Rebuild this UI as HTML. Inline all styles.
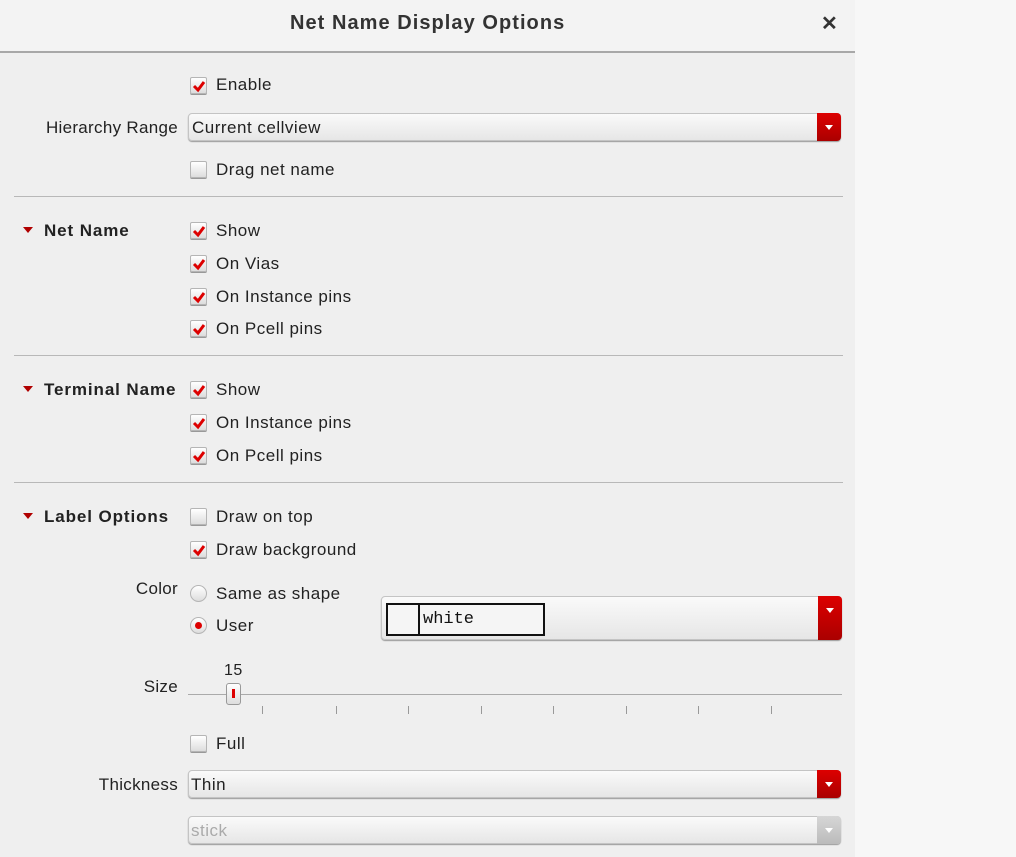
<!DOCTYPE html>
<html><head><meta charset="utf-8"><style>
body{margin:0;width:1016px;height:857px;background:#f7f7f7;font-family:"Liberation Sans",sans-serif;color:#222;position:relative;overflow:hidden}
.dlg{position:absolute;left:0;top:0;width:855px;height:857px;background:#efefef}
.hdr{position:absolute;left:0;top:0;width:855px;height:51px;background:#f3f3f3;border-bottom:2px solid #a8a8a8}
.t{position:absolute;font-size:17px;line-height:20px;white-space:nowrap;letter-spacing:0.5px;margin-top:1px}
.r{right:677px;letter-spacing:0.3px}
.b{font-weight:bold;letter-spacing:0.9px}
.cb{position:absolute;left:190px;width:15px;height:15px;border:1px solid #b5b5b5;border-radius:2px;background:linear-gradient(#fff,#ddd);box-shadow:0 1px 0 #999}
.cb svg{position:absolute;left:1px;top:1px}
.sep{position:absolute;left:14px;width:829px;height:1px;background:#b8b8b8}
.tri{position:absolute;left:23px;width:0;height:0;border-left:5px solid transparent;border-right:5px solid transparent;border-top:6px solid #b00000}
.combo{position:absolute;left:188px;width:651px;height:26px;border:1px solid #c4c4c4;border-radius:4px;background:linear-gradient(#fafafa,#e6e6e6);box-shadow:0 1px 1px #999}
.arr{position:absolute;right:-1px;top:-1px;width:24px;height:28px;border-radius:0 4px 4px 0;background:linear-gradient(#d00,#a00)}
.arr:after{content:"";position:absolute;left:8px;top:12px;border-left:4px solid transparent;border-right:4px solid transparent;border-top:5px solid #fff}
.rad{position:absolute;left:190px;width:15px;height:15px;border:1px solid #b5b5b5;border-radius:50%;background:linear-gradient(#fff,#ddd)}
.tick{position:absolute;top:706px;width:1px;height:8px;background:#999}
</style></head><body>
<div class="dlg">
<div class="hdr"></div>
<div class="t b" style="left:290px;top:12px;font-size:20px;letter-spacing:1.05px;color:#333">Net Name Display Options</div>
<div class="t b" style="left:821px;top:13px;font-size:20px;color:#333">✕</div>

<div class="cb" style="top:77px"><svg width="14" height="14"><path d="M2 7 L6 11 L12 3" stroke="#d00" stroke-width="3" fill="none"/></svg></div>
<div class="t" style="left:216px;top:74px">Enable</div>
<div class="t r" style="top:117px">Hierarchy Range</div>
<div class="combo" style="top:113px"><div class="t" style="left:3px;top:3px">Current cellview</div><div class="arr"></div></div>
<div class="cb" style="top:161px"></div>
<div class="t" style="left:216px;top:159px">Drag net name</div>
<div class="sep" style="top:196px"></div>

<div class="tri" style="top:227px"></div>
<div class="t b" style="left:44px;top:220px">Net Name</div>
<div class="cb" style="top:222px"><svg width="14" height="14"><path d="M2 7 L6 11 L12 3" stroke="#d00" stroke-width="3" fill="none"/></svg></div>
<div class="t" style="left:216px;top:220px">Show</div>
<div class="cb" style="top:255px"><svg width="14" height="14"><path d="M2 7 L6 11 L12 3" stroke="#d00" stroke-width="3" fill="none"/></svg></div>
<div class="t" style="left:216px;top:253px">On Vias</div>
<div class="cb" style="top:288px"><svg width="14" height="14"><path d="M2 7 L6 11 L12 3" stroke="#d00" stroke-width="3" fill="none"/></svg></div>
<div class="t" style="left:216px;top:286px">On Instance pins</div>
<div class="cb" style="top:320px"><svg width="14" height="14"><path d="M2 7 L6 11 L12 3" stroke="#d00" stroke-width="3" fill="none"/></svg></div>
<div class="t" style="left:216px;top:318px">On Pcell pins</div>
<div class="sep" style="top:355px"></div>

<div class="tri" style="top:386px"></div>
<div class="t b" style="left:44px;top:379px">Terminal Name</div>
<div class="cb" style="top:381px"><svg width="14" height="14"><path d="M2 7 L6 11 L12 3" stroke="#d00" stroke-width="3" fill="none"/></svg></div>
<div class="t" style="left:216px;top:379px">Show</div>
<div class="cb" style="top:414px"><svg width="14" height="14"><path d="M2 7 L6 11 L12 3" stroke="#d00" stroke-width="3" fill="none"/></svg></div>
<div class="t" style="left:216px;top:412px">On Instance pins</div>
<div class="cb" style="top:447px"><svg width="14" height="14"><path d="M2 7 L6 11 L12 3" stroke="#d00" stroke-width="3" fill="none"/></svg></div>
<div class="t" style="left:216px;top:445px">On Pcell pins</div>
<div class="sep" style="top:482px"></div>

<div class="tri" style="top:513px"></div>
<div class="t b" style="left:44px;top:506px">Label Options</div>
<div class="cb" style="top:508px"></div>
<div class="t" style="left:216px;top:506px">Draw on top</div>
<div class="cb" style="top:541px"><svg width="14" height="14"><path d="M2 7 L6 11 L12 3" stroke="#d00" stroke-width="3" fill="none"/></svg></div>
<div class="t" style="left:216px;top:539px">Draw background</div>

<div class="t r" style="top:578px">Color</div>
<div class="rad" style="top:585px"></div>
<div class="t" style="left:216px;top:583px">Same as shape</div>
<div class="rad" style="top:617px"><div style="position:absolute;left:4px;top:4px;width:7px;height:7px;border-radius:50%;background:#d00"></div></div>
<div class="t" style="left:216px;top:615px">User</div>
<div class="combo" style="left:381px;top:596px;width:459px;height:42px"><div style="position:absolute;left:4px;top:6px;width:155px;height:29px;border:2px solid #111;background:#f5f5f5"><div style="position:absolute;left:30px;top:0;width:2px;height:29px;background:#111"></div><div class="t" style="left:35px;top:4px;font-family:'Liberation Mono',monospace;font-size:17px;letter-spacing:0;color:#111">white</div></div><div class="arr" style="height:44px"></div></div>

<div class="t" style="left:224px;top:660px;font-size:16px">15</div>
<div class="t r" style="top:676px">Size</div>
<div style="position:absolute;left:188px;top:694px;width:654px;height:1px;background:#aaa"></div>
<div style="position:absolute;left:226px;top:683px;width:13px;height:20px;border:1px solid #999;border-radius:3px;background:linear-gradient(#fff,#ddd)"><div style="position:absolute;left:5px;top:5px;width:3px;height:9px;background:#d00"></div></div>
<div class="tick" style="left:262px"></div><div class="tick" style="left:336px"></div><div class="tick" style="left:408px"></div><div class="tick" style="left:481px"></div><div class="tick" style="left:553px"></div><div class="tick" style="left:626px"></div><div class="tick" style="left:698px"></div><div class="tick" style="left:771px"></div>

<div class="cb" style="top:735px"></div>
<div class="t" style="left:216px;top:733px">Full</div>
<div class="t r" style="top:774px">Thickness</div>
<div class="combo" style="top:770px"><div class="t" style="left:2px;top:3px">Thin</div><div class="arr"></div></div>
<div class="combo" style="top:816px;color:#aaa"><div class="t" style="left:2px;top:3px;color:#aaa">stick</div><div class="arr" style="background:linear-gradient(#d6d6d6,#bbb)"></div></div>
</div>
</body></html>
